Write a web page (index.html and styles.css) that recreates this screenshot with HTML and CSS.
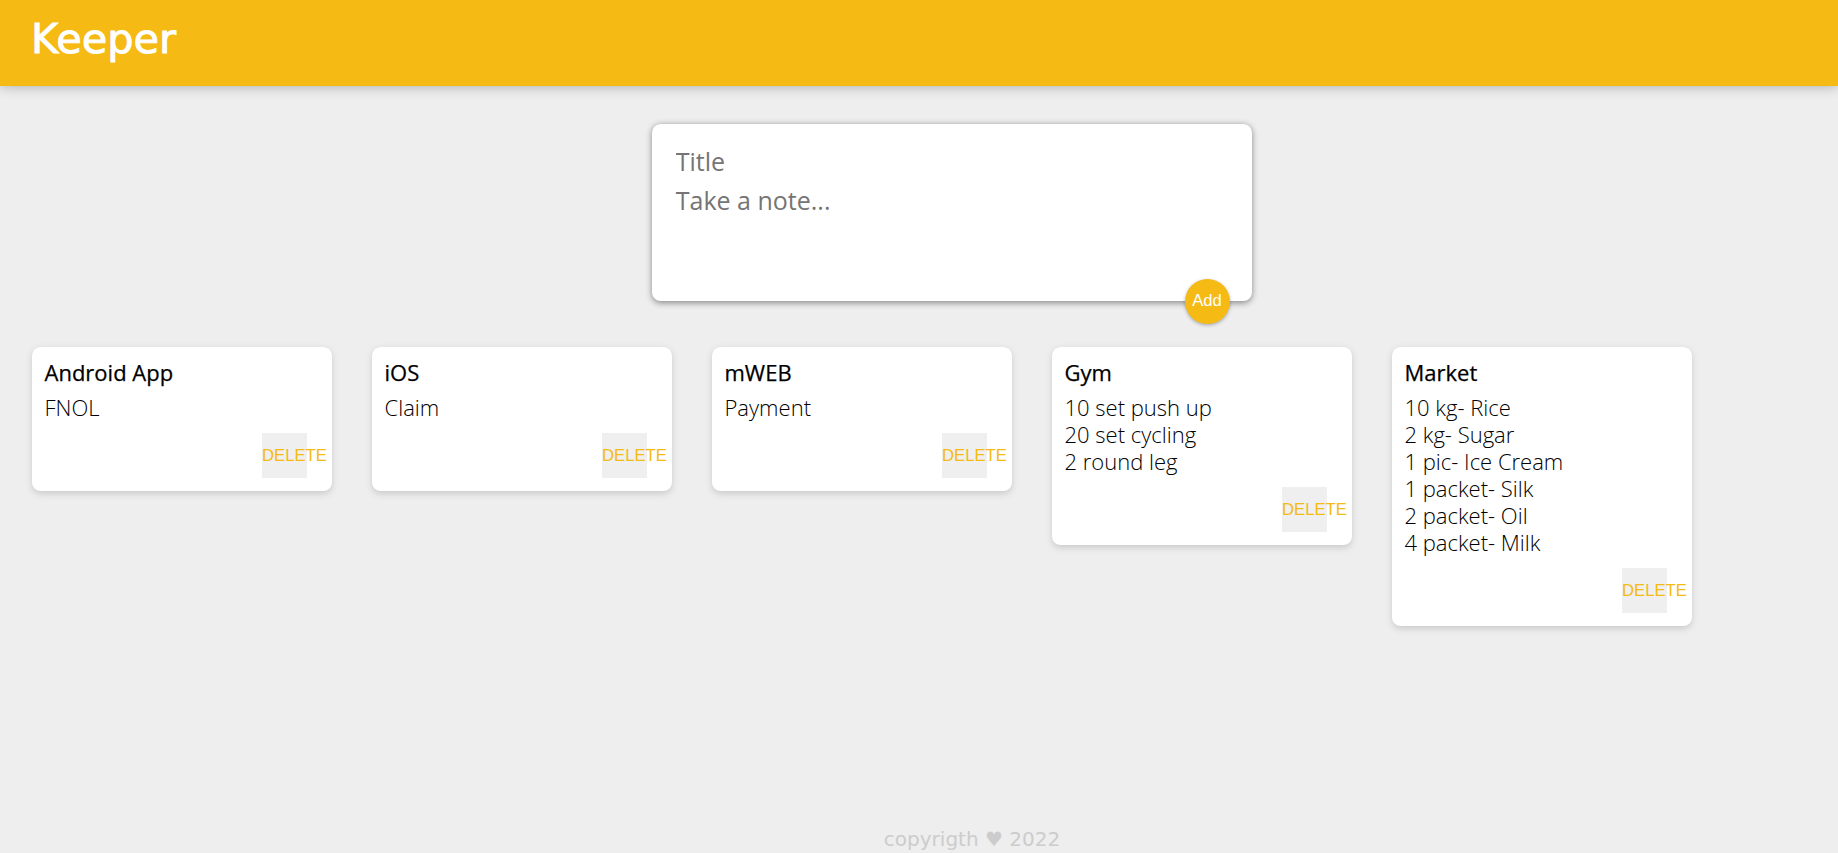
FILE: index.html
```html
<!DOCTYPE html>
<html lang="en">
<head>
<meta charset="utf-8">
<title>Keeper</title>
<link rel="stylesheet" href="styles.css">
</head>
<body>
<header class="app-header">
  <h1 class="logo">Keeper</h1>
</header>
<main class="content">
  <form class="create-note">
    <input class="create-title" name="title" placeholder="Title">
    <textarea class="create-body" name="content" placeholder="Take a note..." rows="3"></textarea>
    <button class="add-btn" type="button">Add</button>
  </form>
  <div class="notes">
    <div class="note">
      <h1 class="note-title">Android App</h1>
      <p class="note-text">FNOL</p>
      <button class="delete-btn" type="button">DELETE</button>
    </div>
    <div class="note">
      <h1 class="note-title">iOS</h1>
      <p class="note-text">Claim</p>
      <button class="delete-btn" type="button">DELETE</button>
    </div>
    <div class="note">
      <h1 class="note-title">mWEB</h1>
      <p class="note-text">Payment</p>
      <button class="delete-btn" type="button">DELETE</button>
    </div>
    <div class="note">
      <h1 class="note-title">Gym</h1>
      <p class="note-text">10 set push up
20 set cycling
2 round leg</p>
      <button class="delete-btn" type="button">DELETE</button>
    </div>
    <div class="note">
      <h1 class="note-title">Market</h1>
      <p class="note-text">10 kg- Rice
2 kg- Sugar
1 pic- Ice Cream
1 packet- Silk
2 packet- Oil
4 packet- Milk</p>
      <button class="delete-btn" type="button">DELETE</button>
    </div>
  </div>
</main>
<footer class="app-footer">
  <p class="copyright">copyrigth ♥ 2022</p>
</footer>
</body>
</html>
```

FILE: styles.css
```css
* {
  margin: 0;
  padding: 0;
  box-sizing: border-box;
}

html {
  font-family: "Open Sans", "DejaVu Sans", sans-serif;
}

body {
  background: #eeeeee;
  min-height: 100vh;
  display: flex;
  flex-direction: column;
}

.app-header {
  background-color: #f5ba13;
  padding: 16px 32px 24px 31px;
  box-shadow: 0 0 12.5px 0 rgba(0, 0, 0, 0.3);
  position: relative;
  z-index: 1;
}

.logo {
  color: #ffffff;
  font-family: "DejaVu Sans", sans-serif;
  font-weight: normal;
  font-size: 41.5px;
  line-height: 46px;
  -webkit-text-stroke: 0.9px #ffffff;
}

.content {
  flex: 1;
}

.create-note {
  position: relative;
  width: 600px;
  margin: 38px auto 25.5px calc(50% - 267px);
  background: #ffffff;
  padding: 18.75px;
  border-radius: 8.75px;
  box-shadow: 0 1.25px 6.25px rgb(138, 137, 137);
}

.create-title,
.create-body {
  display: block;
  width: 100%;
  border: none;
  padding: 3.6px 5px 6.4px;
  outline: none;
  font-size: 25px;
  line-height: 29.3px;
  font-family: inherit;
  font-weight: 400;
  resize: none;
  color: #000;
  background: transparent;
}

.create-title {
  height: 39.3px;
}

.create-body {
  height: 100.5px;
}

.create-title::placeholder,
.create-body::placeholder {
  color: #757575;
}

.add-btn {
  position: absolute;
  right: 22.5px;
  bottom: -22.5px;
  width: 45px;
  height: 45px;
  border: none;
  border-radius: 50%;
  background: #f5ba13;
  color: #ffffff;
  font-family: "Liberation Sans", Arial, sans-serif;
  font-size: 16.67px;
  box-shadow: 0 1.25px 3.75px rgba(0, 0, 0, 0.3);
  cursor: pointer;
}

.notes {
  display: flex;
  flex-wrap: wrap;
  align-items: flex-start;
  padding-left: 12px;
}

.note {
  width: 300px;
  margin: 20px;
  padding: 12.5px;
  background: #ffffff;
  border-radius: 8.75px;
  box-shadow: 0 2.5px 6.25px #cccccc;
  display: flow-root;
}

.note-title {
  font-size: 22px;
  line-height: 26.8px;
  font-weight: 500;
  color: #000;
  margin-bottom: 7.5px;
  -webkit-text-stroke: 0.25px #000;
}

.note-text {
  font-size: 22px;
  line-height: 27px;
  font-weight: 300;
  color: #000;
  margin-bottom: 12.5px;
  white-space: pre-wrap;
  word-wrap: break-word;
}

.delete-btn {
  float: right;
  margin-right: 12.5px;
  width: 45px;
  height: 45px;
  padding: 0;
  border: none;
  background: #efefef;
  color: #f5ba13;
  font-family: "Liberation Sans", Arial, sans-serif;
  font-size: 16.67px;
  text-align: left;
  white-space: nowrap;
  overflow: visible;
  cursor: pointer;
}

.app-footer {
  height: 25px;
  padding-left: 106px;
  text-align: center;
}

.copyright {
  font-family: "DejaVu Sans", sans-serif;
  color: #cccccc;
  font-size: 20px;
  line-height: 23px;
}
```
